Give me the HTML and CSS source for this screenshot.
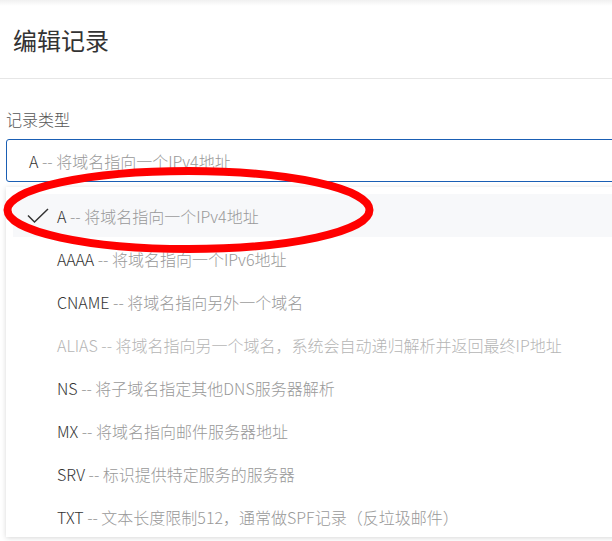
FILE: index.html
```html
<!DOCTYPE html>
<html lang="zh-CN">
<head>
<meta charset="utf-8">
<title>编辑记录</title>
<link rel="stylesheet" href="styles.css">
</head>
<body>
<div class="page">
  <header class="head">
    <h1 class="title">编辑记录</h1>
  </header>
  <section class="form">
    <div class="label">记录类型</div>
    <div class="select">
      <span class="text"><span class="code">A</span><span class="desc"> -- 将域名指向一个IPv4地址</span></span>
    </div>
    <ul class="menu">
      <li class="item selected">
        <svg class="check" width="22" height="16" viewBox="0 0 22 16"><path d="M1 7.5 L7.5 14 L21 1" fill="none" stroke="#333" stroke-width="1.5"/></svg>
        <span class="text"><span class="code">A</span><span class="desc"> -- 将域名指向一个IPv4地址</span></span>
      </li>
      <li class="item"><span class="text"><span class="code">AAAA</span><span class="desc"> -- 将域名指向一个IPv6地址</span></span></li>
      <li class="item"><span class="text"><span class="code">CNAME</span><span class="desc"> -- 将域名指向另外一个域名</span></span></li>
      <li class="item disabled"><span class="text"><span class="code">ALIAS</span><span class="desc"> -- 将域名指向另一个域名，系统会自动递归解析并返回最终IP地址</span></span></li>
      <li class="item"><span class="text"><span class="code">NS</span><span class="desc"> -- 将子域名指定其他DNS服务器解析</span></span></li>
      <li class="item"><span class="text"><span class="code">MX</span><span class="desc"> -- 将域名指向邮件服务器地址</span></span></li>
      <li class="item"><span class="text"><span class="code">SRV</span><span class="desc"> -- 标识提供特定服务的服务器</span></span></li>
      <li class="item"><span class="text"><span class="code">TXT</span><span class="desc"> -- 文本长度限制512，通常做SPF记录（反垃圾邮件）</span></span></li>
    </ul>
  </section>
  <svg class="mark" width="612" height="541" viewBox="0 0 612 541"><ellipse cx="188.5" cy="210" rx="181" ry="39" fill="none" stroke="#ff0000" stroke-width="8"/></svg>
</div>
</body>
</html>
```
FILE: styles.css
```css
html, body {
  margin: 0;
  padding: 0;
  background: #fff;
  overflow: hidden;
}
body {
  font-family: "Noto Sans CJK SC", "Noto Sans", sans-serif;
  font-weight: 300;
  color: #333;
  width: 612px;
  height: 541px;
}
.page {
  position: relative;
  width: 612px;
  height: 541px;
  overflow: hidden;
  background: linear-gradient(#f0f0f0, #fff 6px);
}
.head {
  height: 78px;
  border-bottom: 1px solid #e6e6e6;
  display: flex;
  align-items: center;
  padding-left: 13px;
}
.title {
  margin: 0;
  font-size: 24px;
  font-weight: 400;
  color: #333;
}
.form {
  padding: 29px 0 0 6px;
  width: 700px;
}
.label {
  font-size: 16px;
  color: #555;
  line-height: 22px;
  height: 22px;
  margin-bottom: 9px;
}
.select {
  height: 41px;
  border: 1px solid #1a5fb4;
  border-radius: 3px;
  display: flex;
  align-items: center;
  padding-left: 22px;
  font-size: 16px;
}
.text { white-space: pre; }
.code { color: #333; }
.desc { color: #999; }
.menu {
  list-style: none;
  margin: 5px 0 0 0;
  padding: 7px 0 0 7px;
  height: 343px;
  overflow: hidden;
  background: #fff;
  box-shadow: 0 1px 5px rgba(0,0,0,0.16);
  font-size: 16px;
}
.item {
  height: 43px;
  display: flex;
  align-items: center;
  padding-left: 44px;
  position: relative;
}
.item.selected {
  background: #f7f8fa;
}
.item.disabled .code,
.item.disabled .desc {
  color: #b5b5b5;
}
.check {
  position: absolute;
  left: 14px;
  top: 14px;
}
.mark {
  position: absolute;
  left: 0;
  top: 0;
  pointer-events: none;
}
```
